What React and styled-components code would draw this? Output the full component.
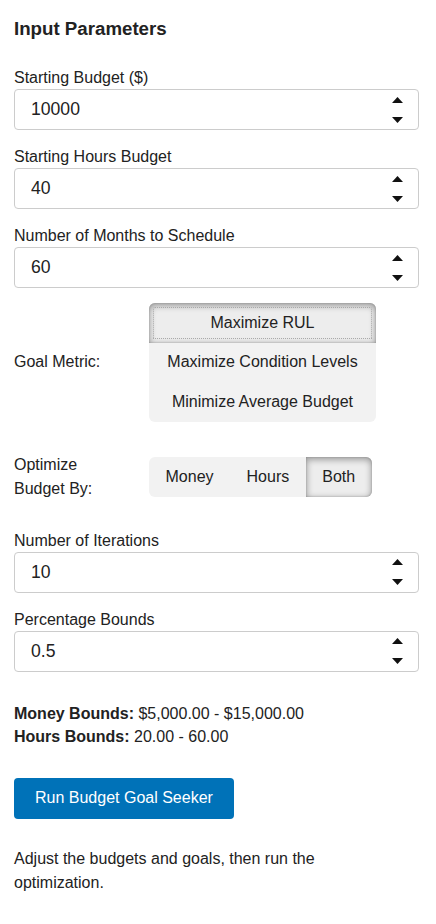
import React, { useState } from "react";
import styled, { createGlobalStyle, css } from "styled-components";

const Global = createGlobalStyle`
  html, body { margin: 0; padding: 0; background: #fff; }
  body { font-family: "Liberation Sans", Arial, sans-serif; color: #222; }
  * { box-sizing: border-box; }
`;

const Page = styled.div`
  width: 436px;
  padding: 18px 17px 20px 14px;
  display: flex;
  flex-direction: column;
`;

const Heading = styled.h2`
  margin: 0 0 28px 0;
  font-size: 18.7px;
  line-height: 22px;
  font-weight: bold;
  color: #222;
`;

const Field = styled.div`
  display: flex;
  flex-direction: column;
  margin-bottom: ${(p) => p.$mb || 17}px;
`;

const Label = styled.label`
  font-size: 16px;
  line-height: 20px;
  margin-bottom: 1px;
  color: #222;
`;

const InputBox = styled.div`
  display: flex;
  align-items: center;
  height: 41px;
  border: 1px solid #ccc;
  border-radius: 4px;
  background: #fff;
`;

const ValueInput = styled.input`
  flex: 1;
  min-width: 0;
  border: none;
  outline: none;
  background: transparent;
  font-family: "Liberation Sans", Arial, sans-serif;
  font-size: 17.6px;
  color: #222;
  padding: 0 0 0 16px;
  height: 100%;
`;

const Spinner = styled.div`
  width: 40px;
  height: 100%;
  display: flex;
  flex-direction: column;
  align-items: center;
  justify-content: center;
  gap: 14px;
  padding-right: 2px;
`;

const Arrow = ({ down }) => (
  <svg width="11" height="6" viewBox="0 0 11 6">
    {down ? (
      <polygon points="0,0 11,0 5.5,6" fill="#111" />
    ) : (
      <polygon points="0,6 11,6 5.5,0" fill="#111" />
    )}
  </svg>
);

const NumberField = ({ label, value, mb }) => {
  const [v, setV] = useState(value);
  return (
    <Field $mb={mb}>
      <Label>{label}</Label>
      <InputBox>
        <ValueInput value={v} onChange={(e) => setV(e.target.value)} />
        <Spinner>
          <Arrow />
          <Arrow down />
        </Spinner>
      </InputBox>
    </Field>
  );
};

const ChoiceRow = styled.div`
  display: grid;
  grid-template-columns: 115px auto;
  column-gap: 20px;
  align-items: center;
  justify-items: start;
  margin-bottom: ${(p) => p.$mb}px;
`;

const RowLabel = styled.div`
  font-size: 16px;
  line-height: 24px;
  color: #222;
`;

const Segments = styled.div`
  display: flex;
  flex-direction: ${(p) => (p.$vertical ? "column" : "row")};
  background: #f2f2f2;
  border-radius: 6px;
  ${(p) => p.$vertical && css`width: 227px;`}
`;

const SegButton = styled.button`
  border: none;
  background: transparent;
  font-family: "Liberation Sans", Arial, sans-serif;
  font-size: 16px;
  color: #222;
  line-height: 20px;
  border-radius: 0;
  cursor: pointer;
  padding: ${(p) => (p.$vertical ? "9.8px 8px" : "10px 16.5px")};
  ${(p) =>
    p.$vertical
      ? css`
          &:first-child { border-radius: 6px 6px 0 0; }
          &:last-child { border-radius: 0 0 6px 6px; }
        `
      : css`
          &:first-child { border-radius: 6px 0 0 6px; }
          &:last-child { border-radius: 0 6px 6px 0; }
        `}
  ${(p) =>
    p.$active &&
    css`
      background: #ededed;
      box-shadow: inset 0 2px 6px 1px rgba(0, 0, 0, 0.32),
        inset 0 0 2px rgba(0, 0, 0, 0.25);
    `}
  ${(p) =>
    p.$focus &&
    css`
      outline: 1px dotted #aaa;
      outline-offset: -5px;
    `}
`;

const Bounds = styled.div`
  font-size: 16px;
  line-height: 23px;
  color: #222;
  margin-bottom: 30px;
  b { font-weight: bold; }
`;

const RunButton = styled.button`
  align-self: flex-start;
  height: 41px;
  padding: 0 21px;
  border: none;
  border-radius: 4px;
  background: #0072b8;
  color: #fff;
  font-family: "Liberation Sans", Arial, sans-serif;
  font-size: 16px;
  cursor: pointer;
  margin-bottom: 28px;
`;

const Note = styled.p`
  margin: 0;
  font-size: 16px;
  line-height: 24px;
  color: #222;
  max-width: 330px;
`;

export default function App() {
  const [goal, setGoal] = useState("rul");
  const [by, setBy] = useState("both");
  const goals = [
    ["rul", "Maximize RUL"],
    ["cond", "Maximize Condition Levels"],
    ["avg", "Minimize Average Budget"],
  ];
  const bys = [
    ["money", "Money"],
    ["hours", "Hours"],
    ["both", "Both"],
  ];
  return (
    <>
      <Global />
      <Page>
        <Heading>Input Parameters</Heading>
        <NumberField label="Starting Budget ($)" value="10000" />
        <NumberField label="Starting Hours Budget" value="40" />
        <NumberField label="Number of Months to Schedule" value="60" mb={15} />

        <ChoiceRow $mb={31}>
          <RowLabel>Goal Metric:</RowLabel>
          <Segments $vertical>
            {goals.map(([k, t]) => (
              <SegButton
                key={k}
                $vertical
                $active={goal === k}
                $focus={goal === k}
                onClick={() => setGoal(k)}
              >
                {t}
              </SegButton>
            ))}
          </Segments>
        </ChoiceRow>

        <ChoiceRow $mb={30}>
          <RowLabel>Optimize Budget By:</RowLabel>
          <Segments>
            {bys.map(([k, t]) => (
              <SegButton key={k} $active={by === k} onClick={() => setBy(k)}>
                {t}
              </SegButton>
            ))}
          </Segments>
        </ChoiceRow>

        <NumberField label="Number of Iterations" value="10" />
        <NumberField label="Percentage Bounds" value="0.5" mb={30} />

        <Bounds>
          <b>Money Bounds:</b> $5,000.00 - $15,000.00
          <br />
          <b>Hours Bounds:</b> 20.00 - 60.00
        </Bounds>

        <RunButton>Run Budget Goal Seeker</RunButton>

        <Note>Adjust the budgets and goals, then run the optimization.</Note>
      </Page>
    </>
  );
}
